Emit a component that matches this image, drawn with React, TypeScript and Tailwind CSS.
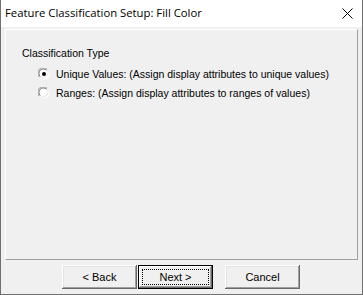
import React from 'react';

const font = { fontFamily: '"Liberation Sans", Arial, sans-serif' };

const Radio: React.FC<{ checked?: boolean }> = ({ checked }) => (
  <svg width="12" height="12" viewBox="0 0 12 12" className="shrink-0">
    <circle cx="6" cy="6" r="5.5" fill="#ffffff" />
    <path d="M1.2 9.2 A5.5 5.5 0 0 1 9.2 1.2" fill="none" stroke="#a0a0a0" strokeWidth="1" />
    <path d="M2.2 8.6 A4.5 4.5 0 0 1 8.6 2.2" fill="none" stroke="#696969" strokeWidth="1" />
    <path d="M9.8 2.8 A5.5 5.5 0 0 1 2.8 9.8" fill="none" stroke="#e3e3e3" strokeWidth="1" />
    {checked && <circle cx="6" cy="6" r="2" fill="#000000" />}
  </svg>
);

const Button: React.FC<{ label: string; primary?: boolean }> = ({ label, primary }) => (
  <div
    className={
      primary
        ? 'w-[75px] h-[24px] border border-black bg-[#f0f0f0] shadow-[inset_-1px_-1px_#696969,inset_1px_1px_#ffffff,inset_-2px_-2px_#a0a0a0] p-[3px]'
        : 'w-[75px] h-[24px] bg-[#f0f0f0] shadow-[inset_-1px_-1px_#696969,inset_1px_1px_#ffffff,inset_-2px_-2px_#a0a0a0,inset_2px_2px_#e3e3e3] p-[3px]'
    }
  >
    <div
      className={
        primary
          ? 'w-full h-full border border-dotted border-black flex items-center justify-center text-[11px] text-black'
          : 'w-full h-full flex items-center justify-center text-[11px] text-black'
      }
    >
      {label}
    </div>
  </div>
);

export default function App() {
  return (
    <div
      className="w-[363px] h-[295px] bg-[#f0f0f0] border-l border-r border-b border-[#707070] flex flex-col"
      style={font}
    >
      <div className="h-[27px] bg-white flex items-center justify-between pl-[4px] pr-[9px]">
        <span className="text-[11.3px] text-black" style={{ fontFamily: '"Open Sans", "Noto Sans", sans-serif' }}>
          Feature Classification Setup: Fill Color
        </span>
        <svg width="11" height="11" viewBox="0 0 11 11">
          <path d="M0.5 0.5 L10.5 10.5 M10.5 0.5 L0.5 10.5" stroke="#000" strokeWidth="1" />
        </svg>
      </div>
      <div className="flex-1 flex flex-col px-[4px] pt-[2px]">
        <div className="h-[231px] border-t border-l border-white border-b border-r border-b-[#a0a0a0] border-r-[#a0a0a0] pl-[16px] pt-[17px]">
          <div className="text-[10.5px] text-black leading-[13px]">Classification Type</div>
          <div className="mt-[8px] ml-[16px] flex flex-col gap-[7px]">
            <div className="flex items-center gap-[6px] text-[10.5px] leading-[12px] text-black">
              <Radio checked />
              <span>Unique Values: (Assign display attributes to unique values)</span>
            </div>
            <div className="flex items-center gap-[6px] text-[10.5px] leading-[12px] text-black">
              <Radio />
              <span>Ranges: (Assign display attributes to ranges of values)</span>
            </div>
          </div>
        </div>
        <div className="flex mt-[5px] pl-[57px]">
          <Button label="< Back" />
          <div className="ml-[1px]">
            <Button label="Next >" primary />
          </div>
          <div className="ml-[12px]">
            <Button label="Cancel" />
          </div>
        </div>
      </div>
    </div>
  );
}
